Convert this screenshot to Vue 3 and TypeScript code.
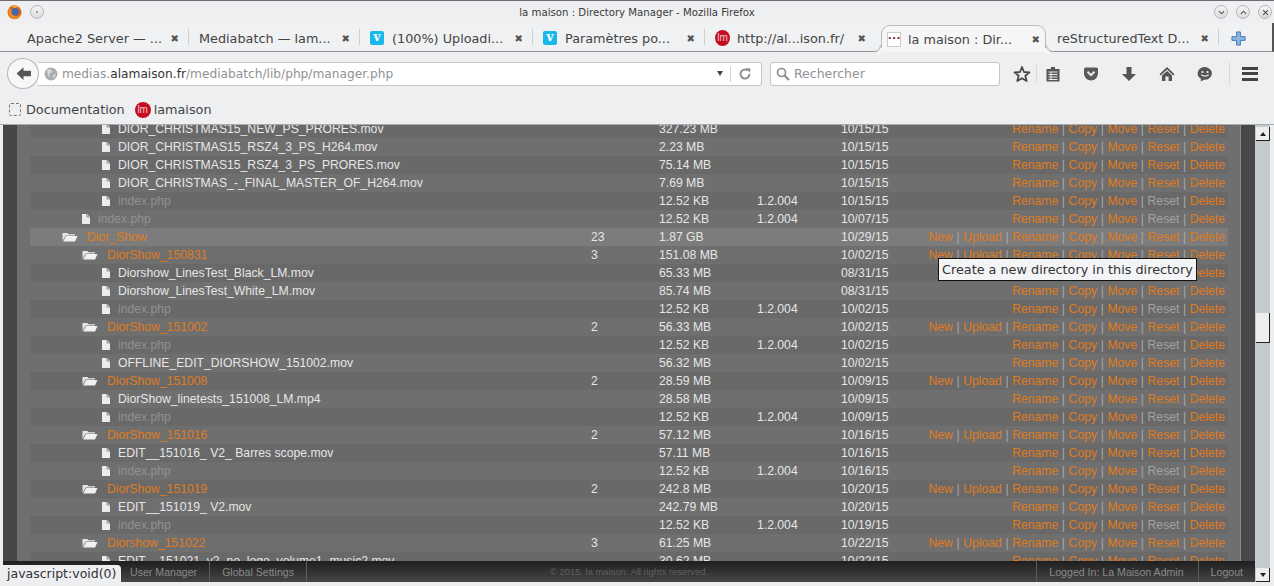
<script setup lang="ts">
interface Row {
  name: string
  indent: number
  dir?: boolean
  dim?: boolean
  count?: string
  size: string
  version?: string
  date: string
  resetOff?: boolean
}

const rows: Row[] = [
  { name: 'DIOR_CHRISTMAS15_NEW_PS_PRORES.mov', indent: 2, size: '327.23 MB', date: '10/15/15' },
  { name: 'DIOR_CHRISTMAS15_RSZ4_3_PS_H264.mov', indent: 2, size: '2.23 MB', date: '10/15/15' },
  { name: 'DIOR_CHRISTMAS15_RSZ4_3_PS_PRORES.mov', indent: 2, size: '75.14 MB', date: '10/15/15' },
  { name: 'DIOR_CHRISTMAS_-_FINAL_MASTER_OF_H264.mov', indent: 2, size: '7.69 MB', date: '10/15/15' },
  { name: 'index.php', indent: 2, dim: true, size: '12.52 KB', version: '1.2.004', date: '10/15/15', resetOff: true },
  { name: 'index.php', indent: 1, dim: true, size: '12.52 KB', version: '1.2.004', date: '10/07/15', resetOff: true },
  { name: 'Dior_Show', indent: 0, dir: true, count: '23', size: '1.87 GB', date: '10/29/15' },
  { name: 'DiorShow_150831', indent: 1, dir: true, count: '3', size: '151.08 MB', date: '10/02/15' },
  { name: 'Diorshow_LinesTest_Black_LM.mov', indent: 2, size: '65.33 MB', date: '08/31/15' },
  { name: 'Diorshow_LinesTest_White_LM.mov', indent: 2, size: '85.74 MB', date: '08/31/15' },
  { name: 'index.php', indent: 2, dim: true, size: '12.52 KB', version: '1.2.004', date: '10/02/15', resetOff: true },
  { name: 'DiorShow_151002', indent: 1, dir: true, count: '2', size: '56.33 MB', date: '10/02/15' },
  { name: 'index.php', indent: 2, dim: true, size: '12.52 KB', version: '1.2.004', date: '10/02/15', resetOff: true },
  { name: 'OFFLINE_EDIT_DIORSHOW_151002.mov', indent: 2, size: '56.32 MB', date: '10/02/15' },
  { name: 'DiorShow_151008', indent: 1, dir: true, count: '2', size: '28.59 MB', date: '10/09/15' },
  { name: 'DiorShow_linetests_151008_LM.mp4', indent: 2, size: '28.58 MB', date: '10/09/15' },
  { name: 'index.php', indent: 2, dim: true, size: '12.52 KB', version: '1.2.004', date: '10/09/15', resetOff: true },
  { name: 'DiorShow_151016', indent: 1, dir: true, count: '2', size: '57.12 MB', date: '10/16/15' },
  { name: 'EDIT__151016_ V2_ Barres scope.mov', indent: 2, size: '57.11 MB', date: '10/16/15' },
  { name: 'index.php', indent: 2, dim: true, size: '12.52 KB', version: '1.2.004', date: '10/16/15', resetOff: true },
  { name: 'DiorShow_151019', indent: 1, dir: true, count: '2', size: '242.8 MB', date: '10/20/15' },
  { name: 'EDIT__151019_ V2.mov', indent: 2, size: '242.79 MB', date: '10/20/15' },
  { name: 'index.php', indent: 2, dim: true, size: '12.52 KB', version: '1.2.004', date: '10/19/15', resetOff: true },
  { name: 'Diorshow_151022', indent: 1, dir: true, count: '3', size: '61.25 MB', date: '10/22/15' },
  { name: 'EDIT__151021_v2_no_logo_volume1_music2.mov', indent: 2, size: '30.62 MB', date: '10/22/15' },
]

const tabs = [
  { label: 'Apache2 Server — ...', icon: false, w: 176 },
  { label: 'Mediabatch — lam...', icon: false, w: 171 },
  { label: '(100%) Uploadi...', icon: true, w: 173 },
  { label: 'Paramètres po...', icon: true, w: 172 },
]
</script>

<template>
  <div class="window">
    <header class="titlebar">
      <div class="title-left">
        <svg class="fx" viewBox="0 0 16 16" width="15" height="16">
          <circle cx="8" cy="8.3" r="7.4" fill="#d9601f" />
          <circle cx="8.6" cy="7.6" r="4" fill="#3f6aa6" />
          <path d="M3 2.4 C0.4 6 0.6 12 5 14.8 C9 16.6 14.6 14 15.3 9 C14.4 12 10.6 13.2 7.6 12 C5 10.8 4 8.4 5 6 C4 5.4 3.2 4 3 2.4Z" fill="#ee8a25" />
          <path d="M5.4 1.8 C7.6 0.4 11.4 0.8 13.6 3.4 C11.6 2.4 9.4 3 8.4 4 C7.4 3.4 6.2 2.8 5.4 1.8Z" fill="#f2a93a" />
        </svg>
        <span class="wm-btn"><i class="dot"></i></span>
      </div>
      <div class="title-text">la maison : Directory Manager - Mozilla Firefox</div>
      <div class="title-right">
        <span class="wm-btn">
          <svg viewBox="0 0 8 8" width="7" height="7"><path d="M1 2.5 L4 5.5 L7 2.5" fill="none" stroke="#555" stroke-width="1.3" /></svg>
        </span>
        <span class="wm-btn">
          <svg viewBox="0 0 8 8" width="7" height="7"><path d="M1 5.5 L4 2.5 L7 5.5" fill="none" stroke="#555" stroke-width="1.3" /></svg>
        </span>
        <span class="wm-btn">
          <svg viewBox="0 0 8 8" width="7" height="7"><path d="M1.2 1.2 L6.8 6.8 M6.8 1.2 L1.2 6.8" fill="none" stroke="#555" stroke-width="1.3" /></svg>
        </span>
      </div>
    </header>

    <nav class="tabbar">
      <div v-for="t in tabs" :key="t.label" class="tab" :style="{ width: t.w + 'px' }">
        <span v-if="t.icon" class="vimeo">v</span>
        <span class="tab-label">{{ t.label }}</span>
        <span class="tab-x">✖</span>
      </div>
      <div class="tab http">
        <span class="lm small">lm</span>
        <span class="tab-label">http://al...ison.fr/</span>
        <span class="tab-x">✖</span>
      </div>
      <div class="tab active">
        <span class="fav-dots">···</span>
        <span class="tab-label">la maison : Dir...</span>
        <span class="tab-x">✖</span>
      </div>
      <div class="tab last">
        <span class="tab-label">reStructuredText D...</span>
        <span class="tab-x">✖</span>
      </div>
      <svg class="plus" viewBox="0 0 16 16" width="15" height="15">
        <path d="M6 1 H10 V6 H15 V10 H10 V15 H6 V10 H1 V6 H6Z" fill="#8db6e0" stroke="#3a74b5" stroke-width="1" />
      </svg>
    </nav>

    <div class="navbar">
      <span class="back">
        <svg viewBox="0 0 16 16" width="17" height="17"><path d="M8 2 L1.5 8 L8 14 V10.5 H15 V5.5 H8Z" fill="#555" /></svg>
      </span>
      <div class="urlbar">
        <svg class="globe" viewBox="0 0 14 14" width="14" height="14">
          <circle cx="7" cy="7" r="6.5" fill="#a9acb0" />
          <path d="M3 3 L7 2 L8 5 L5 7 L6 10 L4 9 Z M9 8 L12 7 L10 12 Z" fill="#d6d8da" />
        </svg>
        <span class="url"><span class="muted">medias.</span>alamaison.fr<span class="muted">/mediabatch/lib/php/manager.php</span></span>
        <span class="caret"></span>
        <span class="sep"></span>
        <svg viewBox="0 0 14 14" width="14" height="14"><path d="M11.5 7 A4.5 4.5 0 1 1 9.8 3.5" fill="none" stroke="#8a9095" stroke-width="2" /><path d="M8 1 L12.5 1.5 L12 6Z" fill="#8a9095" /></svg>
      </div>
      <div class="search">
        <svg viewBox="0 0 14 14" width="14" height="14"><circle cx="5.5" cy="5.5" r="4" fill="none" stroke="#8b8f93" stroke-width="1.7" /><path d="M8.5 8.5 L13 13" stroke="#8b8f93" stroke-width="2.2" /></svg>
        <span>Rechercher</span>
      </div>
      <div class="tools">
        <svg class="t-star" viewBox="0 0 18 18" width="18" height="18"><path d="M9 2 L11 7 L16.5 7.4 L12.3 10.8 L13.7 16 L9 13.2 L4.3 16 L5.7 10.8 L1.5 7.4 L7 7Z" fill="none" stroke="#4a4a4a" stroke-width="1.8" stroke-linejoin="round" /></svg>
        <span class="t-sep"></span>
        <svg class="t-clip" viewBox="0 0 16 16" width="16" height="16"><path d="M1.5 3 H6 V1 H10 V3 H14.5 V15.5 H1.5Z" fill="#555" /><path d="M3.5 6 H12.5 M3.5 8.5 H12.5 M3.5 11 H12.5 M3.5 13.5 H12.5" stroke="#eee" stroke-width="1" /><path d="M6 6 V14" stroke="#eee" stroke-width="1" /></svg>
        <svg class="t-pocket" viewBox="0 0 16 16" width="16" height="16"><path d="M2.5 1.5 H13.5 Q15 1.5 15 3 V7.5 A7 7 0 0 1 1 7.5 V3 Q1 1.5 2.5 1.5Z" fill="#5a5a5a" /><path d="M4.5 5.8 L8 9.2 L11.5 5.8" fill="none" stroke="#eee" stroke-width="2" /></svg>
        <svg class="t-down" viewBox="0 0 16 16" width="16" height="16"><path d="M5.5 1 H10.5 V8 H15 L8 15 L1 8 H5.5Z" fill="#555" /></svg>
        <svg class="t-home" viewBox="0 0 16 16" width="16" height="16"><path d="M8 1 L15.5 8.2 L14.3 9.4 L8 3.6 L1.7 9.4 L0.5 8.2Z M3 9.6 L8 5 L13 9.6 V15 H9.6 V10.5 H6.4 V15 H3Z" fill="#555" /></svg>
        <svg class="t-chat" viewBox="0 0 16 16" width="16" height="16"><path d="M8 1 A7.4 6.4 0 1 1 7 13.8 L3.6 15.6 L4 12.7 A7.4 6.4 0 0 1 8 1Z" fill="#555" /><circle cx="5.5" cy="6" r="1.1" fill="#eee" /><circle cx="10.5" cy="6" r="1.1" fill="#eee" /><path d="M4.2 8.6 Q8 11.8 11.8 8.6" fill="none" stroke="#eee" stroke-width="1.2" /></svg>
        <span class="t-sep tall"></span>
        <span class="burger"><i></i><i></i><i></i></span>
      </div>
    </div>

    <div class="bookmarks">
      <span class="bm"><i class="bm-empty"></i>Documentation</span>
      <span class="bm"><span class="lm">lm</span>lamaison</span>
    </div>

    <main class="page">
      <div class="content">
        <div class="body">
          <div class="rail"></div>
          <div class="panel">
            <div class="list">
              <div v-for="(r, i) in rows" :key="i" class="row" :class="{ alt: i % 2 === 0, hover: r.name === 'Dior_Show' }">
                <div class="name" :class="'lv' + r.indent">
                  <svg v-if="r.dir" class="ico-dir" viewBox="0 0 16 10" width="16" height="10">
                    <path d="M0.5 1 H5.5 L6.5 2.2 H13 V3.4 H3.6 L0.5 9Z" fill="#e6e6e6" />
                    <path d="M4 4 H15.5 L13 9.6 H1.2Z" fill="#f0f0f0" />
                  </svg>
                  <svg v-else class="ico-file" viewBox="0 0 8 10" width="8" height="10">
                    <path d="M0 0 H5 L8 3 V10 H0Z" fill="#ececec" />
                    <path d="M5 0 V3 H8" fill="none" stroke="#777" stroke-width="0.8" />
                  </svg>
                  <a v-if="r.dir" class="lnk">{{ r.name }}</a>
                  <span v-else :class="{ dimname: r.dim }">{{ r.name }}</span>
                </div>
                <div>{{ r.count }}</div>
                <div>{{ r.size }}</div>
                <div>{{ r.version }}</div>
                <div>{{ r.date }}</div>
                <div class="actions">
                  <template v-if="r.dir">
                    <a class="lnk">New</a><i>|</i><a class="lnk">Upload</a><i>|</i>
                  </template>
                  <a class="lnk">Rename</a><i>|</i><a class="lnk">Copy</a><i>|</i><a class="lnk">Move</a><i>|</i>
                  <a class="lnk" :class="{ off: r.resetOff }">Reset</a><i>|</i><a class="lnk">Delete</a>
                </div>
              </div>
            </div>
          </div>
          <div class="rail"></div>
        </div>
        <footer class="footer">
          <div class="foot-item first"></div>
          <div class="foot-item">User Manager</div>
          <div class="foot-item">Global Settings</div>
          <div class="copy">© 2015, la maison. All rights reserved.</div>
          <div class="foot-item left logged">Logged In: La Maison Admin</div>
          <div class="foot-item left">Logout</div>
        </footer>
      </div>
      <div class="scrollbar">
        <span class="sb-btn"><b class="up"></b></span>
        <span class="sb-track"><span class="sb-thumb"></span></span>
        <span class="sb-btn"><b class="down"></b></span>
      </div>
      <div class="status">javascript:void(0)</div>
      <div class="tooltip">Create a new directory in this directory</div>
    </main>
  </div>
</template>

<style>
html,
body {
  margin: 0;
  background: #eeeff1;
  overflow: hidden;
}
</style>

<style scoped>
.window {
  width: 1274px;
  height: 586px;
  box-sizing: border-box;
  display: flex;
  flex-direction: column;
  background: #eeeff1;
  border-top: 1px solid #6b6d70;
  font-family: "DejaVu Sans", sans-serif;
  color: #333;
  overflow: hidden;
}

.titlebar {
  height: 22px;
  display: flex;
  align-items: center;
  justify-content: space-between;
  padding: 0 2px 0 7px;
  position: relative;
  flex: none;
}
.title-left {
  display: flex;
  align-items: center;
  gap: 8px;
}
.title-right {
  display: flex;
  align-items: center;
  gap: 8px;
}
.title-text {
  position: absolute;
  left: 0;
  right: 0;
  text-align: center;
  font-size: 11.3px;
  color: #3a3a3a;
  font-family: "DejaVu Sans Condensed", "DejaVu Sans", sans-serif;
  font-stretch: condensed;
}
.wm-btn {
  width: 14px;
  height: 14px;
  box-sizing: border-box;
  border-radius: 50%;
  border: 1px solid #b5b8bb;
  background: linear-gradient(#f6f6f7, #d9dadc);
  display: flex;
  align-items: center;
  justify-content: center;
}
.dot {
  width: 2px;
  height: 2px;
  border-radius: 50%;
  background: #888;
}

.tabbar {
  height: 29px;
  flex: none;
  display: flex;
  background: #f0f1f2;
  border-bottom: 1px solid #8d8f92;
  border-right: 2px solid #555;
  box-sizing: border-box;
  font-size: 12.8px;
  color: #444;
  padding-left: 13px;
  position: relative;
}
.tab {
  box-sizing: border-box;
  height: 100%;
  display: flex;
  align-items: center;
  padding: 2px 10px 0 10px;
  position: relative;
  white-space: nowrap;
}
.tab::after {
  content: "";
  position: absolute;
  right: 0;
  top: 6px;
  bottom: 6px;
  width: 1px;
  background: #cfd0d2;
}
.tab:first-child {
  padding-left: 14px;
}
.tab-label {
  flex: 1;
  min-width: 0;
}
.tab-x {
  font-size: 10px;
  color: #555;
}
.vimeo {
  width: 14px;
  height: 14px;
  border-radius: 2px;
  background: #1ab7ea;
  color: #fff;
  font: bold 12px/13px "DejaVu Serif", serif;
  text-align: center;
  margin-right: 8px;
  flex: none;
}
.lm {
  display: inline-flex;
  align-items: center;
  justify-content: center;
  width: 16px;
  height: 16px;
  border-radius: 50%;
  background: #c40d22;
  color: #f0c8cc;
  font: 10px/1 "Liberation Sans", sans-serif;
  flex: none;
}
.lm.small {
  width: 15px;
  height: 16px;
  margin-right: 7px;
}
.tab.http {
  width: 170px;
  padding-right: 9px;
}
.tab.http::after {
  display: none;
}
.tab.active {
  width: 165px;
  height: 27px;
  margin: 2px 6px 0;
  padding: 1px 5px 0 5px;
  background: #f6f6f7;
  border: 1px solid #b9bbbe;
  border-bottom: 0;
  border-radius: 9px 9px 0 0;
  top: 0;
}
.tab.active::before,
.tab.active::after {
  content: "";
  position: absolute;
  bottom: 0;
  top: auto;
  width: 7px;
  height: 7px;
  background: transparent;
  box-sizing: border-box;
  border-bottom: 1px solid #b9bbbe;
}
.tab.active::before {
  left: -8px;
  border-right: 1px solid #b9bbbe;
  border-bottom-right-radius: 7px;
  box-shadow: 3px 3px 0 #f6f6f7;
}
.tab.active::after {
  right: -8px;
  border-left: 1px solid #b9bbbe;
  border-bottom-left-radius: 7px;
  box-shadow: -3px 3px 0 #f6f6f7;
}
.tab.last {
  width: 167px;
  padding: 2px 10px 0 5px;
}
.fav-dots {
  width: 14px;
  height: 15px;
  box-sizing: border-box;
  border: 1px solid #ccc;
  background: #fff;
  color: #8c1c1c;
  font: bold 13px/9px "Liberation Sans", sans-serif;
  text-align: center;
  margin-right: 7px;
  flex: none;
}
.plus {
  position: absolute;
  left: 1231px;
  top: 8px;
}

.navbar {
  height: 43px;
  flex: none;
  display: flex;
  align-items: center;
  padding-left: 7px;
}
.back {
  width: 32px;
  height: 31px;
  box-sizing: border-box;
  border-radius: 50%;
  border: 1px solid #b5b7ba;
  background: #f7f7f8;
  display: flex;
  align-items: center;
  justify-content: center;
  z-index: 1;
  margin-right: -1px;
  flex: none;
}
.urlbar {
  width: 724px;
  height: 24px;
  box-sizing: border-box;
  border: 1px solid #c3c5c8;
  border-left: 0;
  border-radius: 0 3px 3px 0;
  background: #fff;
  display: flex;
  align-items: center;
  padding: 0 9px 0 6px;
  font-size: 12.2px;
  color: #333;
}
.globe {
  flex: none;
  margin-right: 4px;
}
.url {
  flex: 1;
}
.muted {
  color: #8f9295;
}
.caret {
  width: 0;
  height: 0;
  border-left: 3.5px solid transparent;
  border-right: 3.5px solid transparent;
  border-top: 5px solid #444;
  margin-right: 7px;
}
.sep {
  width: 1px;
  height: 16px;
  background: #d5d6d8;
  margin-right: 7px;
}
.search {
  width: 230px;
  height: 24px;
  box-sizing: border-box;
  margin-left: 8px;
  border: 1px solid #c3c5c8;
  border-radius: 3px;
  background: #fff;
  display: flex;
  align-items: center;
  gap: 4px;
  padding-left: 5px;
  font-size: 12.5px;
  color: #8f9295;
}
.tools {
  display: flex;
  align-items: center;
  margin-left: 13px;
}
.t-sep {
  width: 1px;
  height: 18px;
  background: #d8d9db;
  margin: 0 8px 0 5px;
}
.t-sep.tall {
  height: 24px;
  margin: 0 12px 0 16px;
}
.t-clip,
.t-pocket,
.t-down,
.t-home {
  margin-right: 22px;
}
.burger {
  width: 16px;
  display: flex;
  flex-direction: column;
  gap: 2.5px;
}
.burger i {
  height: 3px;
  background: #444;
}

.bookmarks {
  height: 30px;
  flex: none;
  display: flex;
  align-items: center;
  gap: 10px;
  padding-left: 9px;
  font-size: 12.8px;
  color: #444;
  box-sizing: border-box;
  border-bottom: 1px solid #a9abad;
}
.bm {
  display: flex;
  align-items: center;
  gap: 3px;
}
.bm-empty {
  width: 12px;
  height: 13px;
  box-sizing: border-box;
  border: 1px dashed #777;
  border-radius: 2px;
  margin-right: 2px;
}

.page {
  flex: 1;
  min-height: 0;
  position: relative;
  display: flex;
  background: #eceef0;
  padding: 0 4px 4px 3px;
  font-family: "Liberation Sans", sans-serif;
}
.content {
  flex: 1;
  min-width: 0;
  display: flex;
  flex-direction: column;
}
.body {
  flex: 1;
  min-height: 0;
  display: flex;
  overflow: hidden;
  background: #6f6f6f;
}
.rail {
  width: 14px;
  background: #474747;
  flex: none;
}
.rail:last-child {
  width: 15px;
  border-left: 1px solid #8a8a8a;
  box-sizing: border-box;
}
.panel {
  flex: 1;
  min-width: 0;
  overflow: hidden;
  padding: 0 12px 0 13px;
}
.list {
  margin-top: -5px;
}
.row {
  height: 18px;
  display: grid;
  grid-template-columns: 561px 68px 98px 84px 60px 1fr;
  align-items: center;
  font-size: 12.2px;
  color: #e6e6e6;
  white-space: nowrap;
  padding-right: 3px;
}
.row.alt {
  background: #696969;
}
.row.hover {
  background: #7c7c7c;
}
.name {
  display: flex;
  align-items: center;
}
.lv0 {
  padding-left: 32px;
}
.lv1 {
  padding-left: 52px;
}
.lv2 {
  padding-left: 72px;
}
.ico-dir {
  margin-right: 9px;
  flex: none;
}
.ico-file {
  margin-right: 8px;
  flex: none;
}
.dimname {
  color: #919191;
}
.lnk {
  color: #e07b1c;
}
.lnk.off {
  color: #a3a3a3;
}
.actions {
  display: flex;
  justify-content: flex-end;
  gap: 3.6px;
  color: #a8a8a8;
}
.actions i {
  font-style: normal;
}
.scrollbar {
  width: 15px;
  flex: none;
  background: #c5cacd;
  display: flex;
  flex-direction: column;
  padding-top: 2px;
  box-sizing: border-box;
}
.sb-btn {
  height: 14px;
  margin-left: 1px;
  background: #eceeef;
  border-right: 1px solid #222;
  border-bottom: 1px solid #222;
  box-sizing: border-box;
  display: flex;
  align-items: center;
  justify-content: center;
  flex: none;
}
.sb-btn b {
  width: 0;
  height: 0;
  border-left: 3.5px solid transparent;
  border-right: 3.5px solid transparent;
}
.sb-btn .up {
  border-bottom: 4px solid #222;
}
.sb-btn .down {
  border-top: 4px solid #222;
}
.sb-track {
  flex: 1;
  padding-top: 172px;
}
.sb-thumb {
  display: block;
  height: 30px;
  margin-left: 1px;
  background: #eceeef;
  border-right: 1px solid #222;
  border-bottom: 1px solid #222;
  box-sizing: border-box;
}
.footer {
  height: 21px;
  flex: none;
  display: flex;
  align-items: center;
  background: linear-gradient(#1f1f1f, #454545);
  color: #8a8a8a;
  font-size: 10.6px;
}
.foot-item {
  height: 100%;
  display: flex;
  align-items: center;
  padding: 0 12px;
  border-right: 1px solid #5c5c5c;
}
.foot-item.first {
  width: 115px;
  box-sizing: border-box;
  padding: 0;
  border-right: 0;
}
.foot-item.left {
  border-right: 0;
  border-left: 1px solid #5c5c5c;
}
.foot-item.logged {
  padding-right: 14px;
}
.copy {
  flex: 1;
  padding-left: 243px;
  font-size: 9.4px;
  color: #606060;
}
.status {
  position: absolute;
  left: 2px;
  bottom: 4px;
  height: 17px;
  display: flex;
  align-items: center;
  padding: 0 5px;
  background: #eeeff1;
  border-radius: 0 4px 0 0;
  font: 12.5px "DejaVu Sans", sans-serif;
  color: #333;
}
.tooltip {
  position: absolute;
  left: 938px;
  top: 133px;
  height: 23px;
  box-sizing: border-box;
  padding: 0 3px;
  display: flex;
  align-items: center;
  background: #f3f4f6;
  border: 1px solid #111;
  font: 12.8px "DejaVu Sans", sans-serif;
  color: #333;
  white-space: nowrap;
}
</style>
